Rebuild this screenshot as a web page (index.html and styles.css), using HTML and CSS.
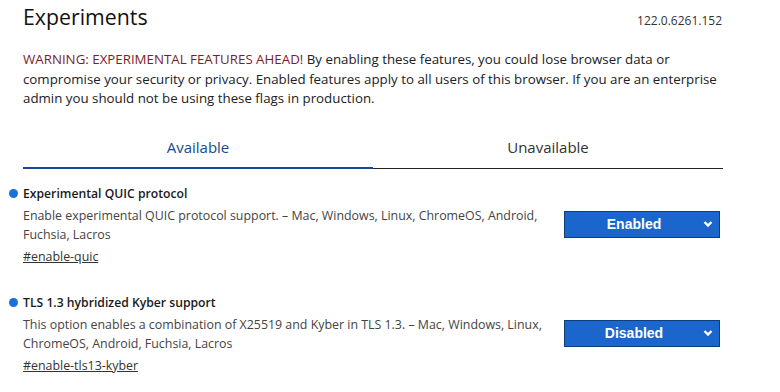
FILE: index.html
```html
<!DOCTYPE html>
<html lang="en">
<head>
    <meta charset="UTF-8">
    <meta name="viewport" content="width=device-width, initial-scale=1.0">
    <title>Experiments</title>
    <link rel="stylesheet" href="styles.css">
</head>
<body>
    <div class="page">
        <div class="header">
            <h1>Experiments</h1>
            <span class="version">122.0.6261.152</span>
        </div>
        <p class="warning"><span class="warning-label">WARNING: EXPERIMENTAL FEATURES AHEAD! </span>By enabling these features, you could lose browser data or compromise your security or privacy. Enabled features apply to all users of this browser. If you are an enterprise admin you should not be using these flags in production.</p>

        <div class="tabs">
            <div class="tab active">Available</div>
            <div class="tab">Unavailable</div>
        </div>

        <div class="flag">
            <div class="flag-title"><span class="dot"></span>Experimental QUIC protocol</div>
            <div class="flag-row">
                <div class="flag-body">
                    <p class="flag-desc">Enable experimental QUIC protocol support. – Mac, Windows, Linux, ChromeOS, Android, Fuchsia, Lacros</p>
                    <a class="flag-link" href="#enable-quic">#enable-quic</a>
                </div>
                <div class="select">
                    <span>Enabled</span>
                    <svg width="10" height="8" viewBox="0 0 10 8"><path d="M1.5 2 L5 5.5 L8.5 2" fill="none" stroke="#fff" stroke-width="2.4"/></svg>
                </div>
            </div>
        </div>

        <div class="flag">
            <div class="flag-title"><span class="dot"></span>TLS 1.3 hybridized Kyber support</div>
            <div class="flag-row">
                <div class="flag-body">
                    <p class="flag-desc">This option enables a combination of X25519 and Kyber in TLS 1.3. – Mac, Windows, Linux, ChromeOS, Android, Fuchsia, Lacros</p>
                    <a class="flag-link" href="#enable-tls13-kyber">#enable-tls13-kyber</a>
                </div>
                <div class="select">
                    <span>Disabled</span>
                    <svg width="10" height="8" viewBox="0 0 10 8"><path d="M1.5 2 L5 5.5 L8.5 2" fill="none" stroke="#fff" stroke-width="2.4"/></svg>
                </div>
            </div>
        </div>
    </div>
</body>
</html>
```

FILE: styles.css
```css
body {
    font-family: "Open Sans", "Noto Sans", sans-serif;
    background-color: #ffffff;
    color: #202124;
    margin: 0;
    padding: 0;
}
.page {
    width: 700px;
    padding: 0 0 0 23px;
}
.header {
    display: flex;
    justify-content: space-between;
    align-items: baseline;
    height: 40px;
}
.header h1 {
    font-size: 21.3px;
    font-weight: 400;
    margin: 0;
    padding-top: 2px;
    color: #111;
}
.version {
    font-size: 12px;
    color: #333;
    margin-right: 1px;
}
.warning {
    font-size: 13.3px;
    line-height: 19.5px;
    color: #202124;
    margin: 10px 0 0;
}
.warning-label {
    color: #7a1c2c;
}
.tabs {
    display: flex;
    margin-top: 20px;
    border-bottom: 1px solid #202124;
}
.tab {
    flex: 1;
    text-align: center;
    font-size: 15px;
    color: #333;
    padding: 8px 0 10px;
}
.tab.active {
    color: #1a4a8a;
    border-bottom: 2px solid #16479a;
    margin-bottom: -1px;
}
.flag {
    margin-top: 16px;
}
.flag + .flag {
    margin-top: 28px;
}
.flag-title {
    display: flex;
    align-items: center;
    margin-left: -14px;
    font-size: 12.2px;
    font-weight: 600;
    color: #1a1a1a;
    line-height: 18px;
}
.dot {
    width: 9px;
    height: 9px;
    border-radius: 50%;
    background-color: #1a6fdc;
    margin-right: 5px;
}
.flag-row {
    display: flex;
    justify-content: space-between;
    align-items: flex-start;
    margin-top: 3px;
}
.flag-body {
    width: 540px;
}
.flag-desc {
    font-size: 12.4px;
    line-height: 19px;
    color: #444;
    margin: 0;
}
.flag-link {
    display: inline-block;
    margin-top: 3px;
    font-size: 12.4px;
    line-height: 19px;
    color: #333;
}
.select {
    width: 148px;
    height: 25px;
    margin: 5px 3px 0 0;
    background-color: #1a66cc;
    border: 1px solid #0e3f7c;
    color: #fff;
    display: flex;
    align-items: center;
    justify-content: space-between;
    padding: 0 6px 0 0;
    box-sizing: content-box;
}
.select span {
    flex: 1;
    text-align: center;
    font-family: "Liberation Sans", Arial, sans-serif;
    font-weight: 700;
    font-size: 14px;
}
```
